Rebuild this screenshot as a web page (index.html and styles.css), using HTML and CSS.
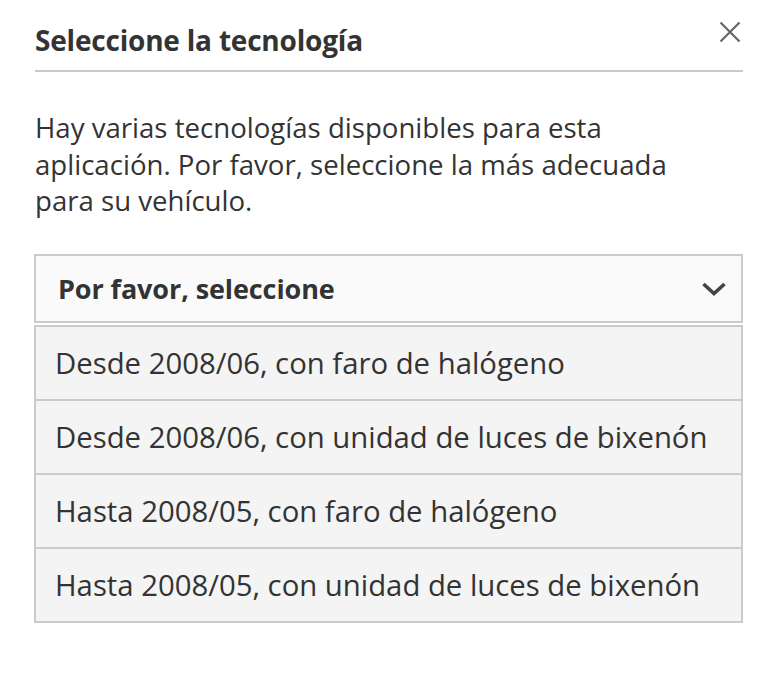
FILE: index.html
```html
<!DOCTYPE html>
<html lang="es">
<head>
<meta charset="utf-8">
<link rel="stylesheet" href="styles.css">
</head>
<body>
<div class="dialog">
  <div class="header">
    <h1 class="title">Seleccione la tecnología</h1>
    <button class="close" aria-label="Cerrar">
      <svg width="22" height="22" viewBox="0 0 22 22"><path d="M1.5 1.5 L20.5 20.5 M20.5 1.5 L1.5 20.5" stroke="#666" stroke-width="2.2" fill="none"/></svg>
    </button>
  </div>
  <p class="intro">Hay varias tecnologías disponibles para esta aplicación. Por favor, seleccione la más adecuada para su vehículo.</p>
  <div class="select">
    <span class="select-label">Por favor, seleccione</span>
    <svg class="chevron" width="26" height="16" viewBox="0 0 26 16"><path d="M2.5 3 L13 12.5 L23.5 3" stroke="#444" stroke-width="3.6" fill="none"/></svg>
  </div>
  <ul class="options">
    <li class="option">Desde 2008/06, con faro de halógeno</li>
    <li class="option">Desde 2008/06, con unidad de luces de bixenón</li>
    <li class="option">Hasta 2008/05, con faro de halógeno</li>
    <li class="option">Hasta 2008/05, con unidad de luces de bixenón</li>
  </ul>
</div>
</body>
</html>
```
FILE: styles.css
```css
html, body {
  margin: 0;
  padding: 0;
  background: #fff;
}
body {
  font-family: "Open Sans", "Noto Sans", sans-serif;
  color: #333;
}
.dialog {
  width: 709px;
  margin-left: 34px;
  padding-top: 23px;
}
.header {
  display: flex;
  align-items: flex-start;
  justify-content: space-between;
  border-bottom: 2px solid #c9c9c9;
  padding-bottom: 13px;
  margin-left: 1px;
}
.title {
  margin: 0;
  font-size: 28px;
  font-weight: 700;
  line-height: 34px;
  color: #333;
  letter-spacing: -0.2px;
}
.close {
  border: 0;
  background: none;
  padding: 0;
  margin: -2px 2px 0 0;
  display: flex;
}
.intro {
  margin: 37px 0 0 1px;
  max-width: 665px;
  font-size: 27.6px;
  line-height: 36.5px;
  color: #333;
}
.select {
  margin-top: 35.5px;
  height: 65px;
  border: 2px solid #cbcbcb;
  background: #fafafa;
  display: flex;
  align-items: center;
  justify-content: space-between;
  padding: 0 14px 0 22px;
}
.select-label {
  font-size: 27px;
  font-weight: 700;
  letter-spacing: -0.1px;
}
.chevron {
  display: block;
}
.options {
  list-style: none;
  margin: 2px 0 0;
  padding: 0;
  border: 2px solid #cbcbcb;
  background: #f4f4f4;
}
.option {
  height: 72px;
  display: flex;
  align-items: center;
  padding-left: 19px;
  font-size: 29.3px;
  border-top: 2px solid #cbcbcb;
}
.option:first-child {
  border-top: 0;
}
```
